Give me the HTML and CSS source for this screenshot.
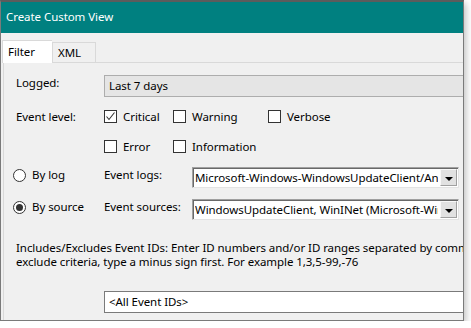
FILE: index.html
```html
<!DOCTYPE html>
<html lang="en">
<head>
    <meta charset="UTF-8">
    <title>Create Custom View</title>
    <link rel="stylesheet" href="styles.css">
</head>
<body>

    <div class="window">
        <div class="titlebar">Create Custom View</div>
        <div class="client">
            <div class="tabs">
                <div class="tab active">Filter</div>
                <div class="tab">XML</div>
            </div>
            <div class="panel">
                <div class="row logged">
                    <div class="label">Logged:</div>
                    <div class="select">Last 7 days</div>
                </div>

                <div class="row level">
                    <div class="label">Event level:</div>
                    <div class="checks">
                        <div class="checkline">
                            <label class="check first">
                                <span class="box">
                                    <svg width="11" height="11" viewBox="0 0 11 11"><polyline points="1.5,5.5 4,8.5 9.5,1.5" fill="none" stroke="#333" stroke-width="1.1"/></svg>
                                </span>Critical
                            </label>
                            <label class="check second"><span class="box"></span>Warning</label>
                            <label class="check"><span class="box"></span>Verbose</label>
                        </div>
                        <div class="checkline">
                            <label class="check first"><span class="box"></span>Error</label>
                            <label class="check second"><span class="box"></span>Information</label>
                        </div>
                    </div>
                </div>

                <div class="row source bylog">
                    <label class="radio"><span class="dot"></span>By log</label>
                    <div class="label">Event logs:</div>
                    <div class="combo">
                        <span class="value">Microsoft-Windows-WindowsUpdateClient/Analytic</span>
                        <span class="drop"><i class="arrow"></i></span>
                    </div>
                </div>

                <div class="row source bysource">
                    <label class="radio"><span class="dot on"></span>By source</label>
                    <div class="label">Event sources:</div>
                    <div class="combo">
                        <span class="value">WindowsUpdateClient, WinINet (Microsoft-Windows-WinINet)</span>
                        <span class="drop"><i class="arrow"></i></span>
                    </div>
                </div>

                <p class="hint">
                    <span>Includes/Excludes Event IDs: Enter ID numbers and/or ID ranges separated by commas. To</span>
                    <span>exclude criteria, type a minus sign first. For example 1,3,5-99,-76</span>
                </p>

                <div class="row ids">
                    <div class="label"></div>
                    <div class="textbox">&lt;All Event IDs&gt;</div>
                </div>
            </div>
        </div>
    </div>

</body>
</html>
```

FILE: styles.css
```css
body {
    margin: 0;
    background-color: #ffffff;
    font-family: "Noto Sans", "Open Sans", sans-serif;
    font-size: 11.5px;
    letter-spacing: -0.06px;
    color: #000;
}
.window {
    width: 462px;
    height: 318px;
    border: 1px solid #7a7a7a;
    border-top: 2px solid #5c5c5c;
    background-color: #f0f0f0;
    box-shadow: 2px 3px 7px rgba(0, 0, 0, 0.25);
    overflow: hidden;
    display: flex;
    flex-direction: column;
}
.titlebar {
    height: 31px;
    flex-shrink: 0;
    background-color: #008080;
    color: white;
    line-height: 30px;
    padding-left: 5px;
    white-space: nowrap;
}
.client {
    padding-top: 7px;
    padding-left: 1px;
    flex: 1;
    display: flex;
    flex-direction: column;
}
.tabs {
    display: flex;
    align-items: flex-end;
    height: 22px;
    position: relative;
    z-index: 1;
}
.tab {
    height: 20px;
    line-height: 19px;
    padding: 0 5px;
    border: 1px solid #d9d9d9;
    border-bottom: none;
    box-sizing: border-box;
    width: 44px;
}
.tab.active {
    height: 23px;
    width: 50px;
    background-color: #ffffff;
    padding-left: 5px;
    line-height: 21px;
    margin-bottom: -1px;
    border-right: none;
}
.panel {
    flex: 1;
    border-top: 1px solid #d9d9d9;
    border-left: 1px solid #d9d9d9;
    margin-left: 1px;
    padding-top: 12px;
    padding-left: 12px;
    white-space: nowrap;
}
.row {
    display: flex;
    align-items: flex-start;
}
.label {
    width: 88px;
    flex-shrink: 0;
    line-height: 16px;
}
.select {
    flex: 1;
    height: 22px;
    box-sizing: border-box;
    margin-right: -20px;
    border: 1px solid #adadad;
    background-color: #e5e5e5;
    padding-left: 4px;
    line-height: 20px;
}
.level {
    margin-top: 13px;
}
.level .label {
    line-height: 14px;
}
.checkline {
    display: flex;
    height: 13px;
    align-items: center;
}
.checkline + .checkline {
    margin-top: 17px;
}
.check {
    display: flex;
    align-items: center;
    line-height: 13px;
}
.check.first {
    width: 69px;
}
.check.second {
    width: 95px;
}
.box {
    width: 13px;
    height: 13px;
    box-sizing: border-box;
    border: 1px solid #333;
    background-color: #fff;
    margin-right: 6px;
    display: flex;
    align-items: center;
    justify-content: center;
}
.source {
    margin-left: -3px;
}
.source .label {
    line-height: 14px;
    padding-top: 1px;
}
.bylog {
    margin-top: 14px;
}
.bysource {
    margin-top: 11px;
}
.radio {
    width: 91px;
    display: flex;
    align-items: center;
    line-height: 14px;
    padding-top: 1px;
}
.dot {
    width: 13px;
    height: 13px;
    box-sizing: border-box;
    border: 1px solid #333;
    border-radius: 50%;
    background-color: #fff;
    margin-right: 6px;
    display: flex;
    align-items: center;
    justify-content: center;
}
.dot.on::after {
    content: "";
    width: 7px;
    height: 7px;
    border-radius: 50%;
    background-color: #333;
}
.combo {
    width: 267px;
    height: 21px;
    box-sizing: border-box;
    border: 1px solid;
    border-color: #a0a0a0 #e3e3e3 #e3e3e3 #a0a0a0;
    box-shadow: inset 1px 1px 0 #696969;
    background-color: #fff;
    display: flex;
    align-items: center;
    padding: 1px 1px 1px 2px;
}
.combo .value {
    flex: 1;
    overflow: hidden;
    line-height: 18px;
}
.drop {
    width: 17px;
    height: 17px;
    box-sizing: border-box;
    background-color: #e1e1e1;
    border: 1px solid;
    border-color: #f8f8f8 #a0a0a0 #a0a0a0 #f8f8f8;
    display: flex;
    align-items: center;
    justify-content: center;
    margin-left: 2px;
    flex-shrink: 0;
}
.arrow {
    width: 0;
    height: 0;
    border-left: 4px solid transparent;
    border-right: 4px solid transparent;
    border-top: 4px solid #000;
    margin-top: 2px;
}
.hint {
    margin: 21px 0 0 0;
    line-height: 13.5px;
}
.hint span {
    display: block;
}
.ids {
    margin-top: 23px;
}
.textbox {
    flex: 1;
    height: 22px;
    box-sizing: border-box;
    margin-right: -20px;
    border: 1px solid #7a7a7a;
    background-color: #fff;
    padding-left: 4px;
    line-height: 20px;
}
```
